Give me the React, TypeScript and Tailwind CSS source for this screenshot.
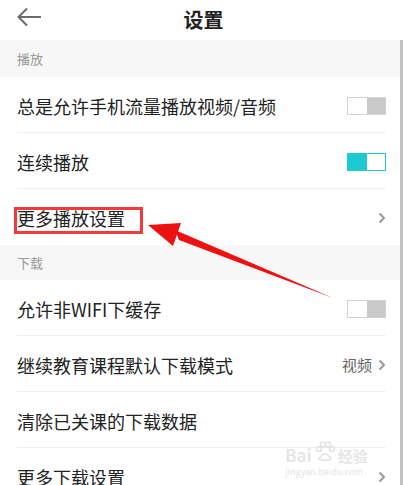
import React from "react";

const font = { fontFamily: '"Noto Sans CJK SC", "Noto Sans", sans-serif' };

function Toggle({ on }: { on: boolean }) {
  return on ? (
    <div className="flex h-[18px] w-[39px] border border-[#1fc9d4]">
      <div className="flex-1 bg-[#1fc9d4]" />
      <div className="flex-1 bg-white" />
    </div>
  ) : (
    <div className="flex h-[18px] w-[39px] border border-[#d2d2d2]">
      <div className="flex-1 bg-white" />
      <div className="flex-1 bg-[#c9c9c9]" />
    </div>
  );
}

function Chevron() {
  return (
    <svg width="8" height="12" viewBox="0 0 8 12" className="ml-[6px]">
      <path d="M1.5 1.5 L6 6 L1.5 10.5" fill="none" stroke="#9a9a9a" strokeWidth="2" />
    </svg>
  );
}

function Row({
  label,
  right,
  divider = true,
}: {
  label: React.ReactNode;
  right?: React.ReactNode;
  divider?: boolean;
}) {
  return (
    <div className="flex h-[56px] flex-col pl-[17px] pr-[14px]">
      <div className="flex flex-1 items-center justify-between pt-[2px]">
        <span className="text-[18px] leading-none text-[#222]">{label}</span>
        {right}
      </div>
      {divider && <div className="h-px bg-[#f0f0f0]" />}
    </div>
  );
}

function Section({ title, h }: { title: string; h: string }) {
  return (
    <div className={`flex items-center bg-[#f7f7f7] pl-[17px] ${h}`}>
      <span className="text-[13px] text-[#9a9a9a]">{title}</span>
    </div>
  );
}

export default function App() {
  return (
    <div className="relative h-[485px] w-[403px] overflow-hidden bg-white" style={font}>
      <div className="relative flex h-[40px] items-center justify-center">
        <svg width="26" height="20" viewBox="0 0 26 20" className="absolute left-[16px] top-[7px]">
          <path d="M25 10 H3 M11 1.5 L2.5 10 L11 18.5" fill="none" stroke="#6b6b6b" strokeWidth="2" />
        </svg>
        <span className="ml-[4px] text-[20px] font-bold leading-none text-[#222]">设置</span>
      </div>
      <div className="flex">
        <div className="flex w-[400px] flex-col">
          <Section title="播放" h="h-[37px]" />
          <Row label="总是允许手机流量播放视频/音频" right={<Toggle on={false} />} />
          <Row label="连续播放" right={<Toggle on={true} />} />
          <Row label="更多播放设置" right={<Chevron />} divider={false} />
          <Section title="下载" h="h-[35px]" />
          <Row label="允许非WIFI下缓存" right={<Toggle on={false} />} />
          <Row
            label="继续教育课程默认下载模式"
            right={
              <div className="flex items-center">
                <span className="text-[15px] leading-none text-[#666]">视频</span>
                <Chevron />
              </div>
            }
          />
          <Row label="清除已关课的下载数据" />
          <Row label="更多下载设置" right={<Chevron />} divider={false} />
        </div>
        <div className="w-[3px] bg-[#c2c2c2]" />
      </div>

      {/* red highlight box */}
      <div className="absolute left-[14px] top-[207px] h-[27px] w-[129px] border-[3px] border-[#f23a3a]" />

      {/* watermark */}
      <div className="absolute left-[285px] top-[443px] flex flex-col items-start">
        <div className="flex h-[20px] items-end gap-[2px] text-[17px] font-bold leading-none text-[#e6e6e6]">
          <span>Bai</span>
          <svg width="22" height="22" viewBox="0 0 22 22">
            <g fill="none" stroke="#e2e2e2" strokeWidth="1.5">
              <circle cx="5" cy="8" r="2.5" />
              <circle cx="9" cy="3.5" r="2.5" />
              <circle cx="14" cy="3.5" r="2.5" />
              <circle cx="18" cy="8" r="2.5" />
              <path d="M5 18 Q11 8 17 18 Q11 21 5 18 Z" />
            </g>
          </svg>
          <span className="text-[15px]">经验</span>
        </div>
        <span className="mt-[4px] text-[9px] leading-none text-[#e4e4e4]">jingyan.baidu.com</span>
      </div>

      {/* red arrow */}
      <svg className="pointer-events-none absolute left-0 top-0" width="403" height="485" viewBox="0 0 403 485">
        <polygon points="148,225 181,223 173,246" fill="#ee1111" />
        <polygon points="175,230 179,240 333,298" fill="#ee1111" />
      </svg>
    </div>
  );
}
